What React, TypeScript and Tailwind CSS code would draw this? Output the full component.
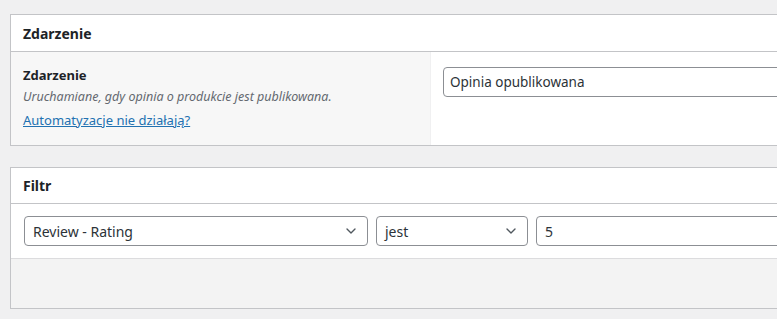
import { ChevronDown } from "lucide-react"

function Select({ value, className }: { value: string; className: string }) {
  return (
    <div
      className={`flex h-[30px] shrink-0 items-center justify-between rounded-[4px] border border-[#8c8f94] bg-white pl-2 pr-2 text-[14px] text-[#2c3338] ${className}`}
    >
      <span>{value}</span>
      <ChevronDown size={16} strokeWidth={2} className="text-[#50575e]" />
    </div>
  )
}

export default function App() {
  return (
    <div
      className="min-h-[319px] overflow-hidden bg-[#f0f0f1] pt-[14px] pl-[10px]"
      style={{ fontFamily: '"Noto Sans", "Open Sans", sans-serif' }}
    >
      {/* ZDARZENIE */}
      <div className="w-[820px] border border-[#c3c4c7] bg-white">
        <div className="flex h-[37px] items-center border-b border-[#c3c4c7] px-3">
          <h2 className="text-[14px] font-bold text-[#1d2327]">Zdarzenie</h2>
        </div>
        <div className="flex h-[93px]">
          <div className="w-[420px] border-r border-[#f0f0f1] bg-[#f7f7f7] px-3 pt-[14px]">
            <div className="text-[13px] font-bold leading-[18px] text-[#1d2327]">Zdarzenie</div>
            <div className="mt-[4px] text-[12.5px] italic leading-[18px] text-[#646970]">
              Uruchamiane, gdy opinia o produkcie jest publikowana.
            </div>
            <a href="#" className="mt-[5px] block text-[13px] leading-[18px] text-[#2271b1] underline">
              Automatyzacje nie działają?
            </a>
          </div>
          <div className="flex-1 pt-[15px] pl-3">
            <div className="flex h-[30px] w-[380px] items-center rounded-[4px] border border-[#8c8f94] bg-white px-[6px] text-[13.5px] text-[#2c3338]">
              Opinia opublikowana
            </div>
          </div>
        </div>
      </div>

      {/* FILTR */}
      <div className="mt-[21px] w-[820px] border border-[#c3c4c7] bg-white">
        <div className="flex h-[36px] items-center border-b border-[#c3c4c7] px-3">
          <h2 className="text-[14px] font-bold text-[#1d2327]">Filtr</h2>
        </div>
        <div className="flex gap-[8px] border-b border-[#dcdcde] px-[13px] pt-[12px] pb-[12px]">
          <Select value="Review - Rating" className="w-[344px]" />
          <Select value="jest" className="w-[152px]" />
          <div className="flex h-[30px] w-[300px] shrink-0 items-center rounded-[4px] border border-[#8c8f94] bg-white px-2 text-[14px] text-[#2c3338]">
            5
          </div>
        </div>
        <div className="h-[49px] bg-[#f3f3f3]" />
      </div>
    </div>
  )
}
